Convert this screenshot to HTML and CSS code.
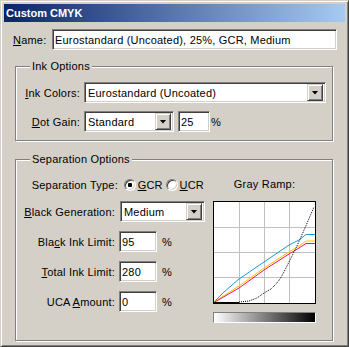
FILE: index.html
```html
<!DOCTYPE html>
<html lang="en">
<head>
    <meta charset="UTF-8">
    <title>Custom CMYK</title>
    <link rel="stylesheet" href="styles.css">
</head>
<body>
    <div class="window">
        <div class="titlebar">Custom CMYK</div>
        <div class="content">
            <div class="name-row">
                <label class="name-label" for="name"><u>N</u>ame:</label>
                <input class="field name-field" id="name" value="Eurostandard (Uncoated), 25%, GCR, Medium">
            </div>

            <fieldset class="group ink-group">
                <legend>Ink Options</legend>
                <div class="ink-grid">
                    <span class="label"><u>I</u>nk Colors:</span>
                    <div class="combo combo-ink"><span class="combo-text">Eurostandard (Uncoated)</span><span class="combo-btn"></span></div>
                    <span class="label"><u>D</u>ot Gain:</span>
                    <div class="gain-row">
                        <div class="combo combo-gain"><span class="combo-text">Standard</span><span class="combo-btn"></span></div>
                        <input class="field gain-field" value="25">
                        <span class="pct gain-pct">%</span>
                    </div>
                </div>
            </fieldset>

            <fieldset class="group sep-group">
                <legend>Separation Options</legend>
                <div class="sep-body">
                    <div class="sep-grid">
                        <div class="sep-type">
                            <span class="sep-type-label">Separation Type:</span>
                            <input type="radio" class="radio" name="sep" checked>
                            <span class="radio-text"><u>G</u>CR</span>
                            <input type="radio" class="radio" name="sep">
                            <span class="radio-text"><u>U</u>CR</span>
                        </div>

                        <span class="label"><u>B</u>lack Generation:</span>
                        <div class="combo combo-black"><span class="combo-text">Medium</span><span class="combo-btn"></span></div>

                        <span class="label">Bla<u>c</u>k Ink Limit:</span>
                        <input class="field num-field" value="95">
                        <span class="pct">%</span>

                        <span class="label"><u>T</u>otal Ink Limit:</span>
                        <input class="field num-field" value="280">
                        <span class="pct">%</span>

                        <span class="label">UCA <u>A</u>mount:</span>
                        <input class="field num-field" value="0">
                        <span class="pct">%</span>
                    </div>

                    <div class="ramp">
                        <div class="ramp-title">Gray Ramp:</div>
                        <svg class="ramp-graph" width="103" height="103" viewBox="0 0 103 103">
                            <rect x="0" y="0" width="103" height="103" fill="#fff"/>
                            <g stroke="#c0c0c0" stroke-width="1">
                                <line x1="26.5" y1="1" x2="26.5" y2="102"/>
                                <line x1="51.5" y1="1" x2="51.5" y2="102"/>
                                <line x1="76.5" y1="1" x2="76.5" y2="102"/>
                                <line x1="1" y1="26.5" x2="102" y2="26.5"/>
                                <line x1="1" y1="51.5" x2="102" y2="51.5"/>
                                <line x1="1" y1="76.5" x2="102" y2="76.5"/>
                            </g>
                            <g fill="none" stroke-width="1">
                                <polyline stroke="#1a9ad6" points="1,101 11,91 26,78 51,61 76,44 86,39 93,33.5 102,33.5"/>
                                <polyline stroke="#ffc400" points="1,101 26,85 51,67 76,51 86,45 93,40 102,40"/>
                                <polyline stroke="#f2145c" points="1,101.5 26,87 51,69 76,53 86,47 93,42.5 102,42.5"/>
                                <polyline stroke="#000" stroke-dasharray="1 1" points="26,101 36,100 44,97 51,92 58,88 63,83 67,78 71,71 76,61 80,53 83,47 88,36 95,20 101,6"/>
                                <line stroke="#000" x1="1" y1="101.5" x2="26" y2="101.5"/>
                            </g>
                            <rect x="0.5" y="0.5" width="102" height="102" fill="none" stroke="#000"/>
                        </svg>
                        <div class="ramp-bar"></div>
                    </div>
                </div>
            </fieldset>
        </div>
    </div>
</body>
</html>
```

FILE: styles.css
```css
* {
    box-sizing: border-box;
}
body {
    margin: 0;
    background-color: #d4d0c8;
    font: 11px "Liberation Sans", Arial, sans-serif;
    letter-spacing: 0.2px;
    color: #000;
}
u {
    text-decoration: underline;
    text-underline-offset: 1px;
}
.window {
    width: 349px;
    height: 347px;
    border: 1px solid;
    border-color: #d4d0c8 #404040 #404040 #d4d0c8;
    box-shadow: inset 1px 1px #fff, inset -1px -1px #808080;
    padding: 3px;
}
.titlebar {
    height: 18px;
    line-height: 18px;
    padding-left: 2px;
    background: linear-gradient(to right, #0a246a, #a6caf0);
    color: #fff;
    font-weight: bold;
    letter-spacing: 0;
}
.content {
    padding: 7px 0 0 9px;
}

/* sunken text field */
.field {
    height: 21px;
    margin: 0;
    padding: 0 2px;
    border: 1px solid;
    border-color: #808080 #fff #fff #808080;
    box-shadow: inset 1px 1px #404040, inset -1px -1px #d4d0c8;
    background-color: #fff;
    font: inherit;
    letter-spacing: inherit;
    color: #000;
    outline: none;
}
.name-row {
    display: flex;
    align-items: center;
}
.name-label {
    width: 39px;
}
.name-field {
    width: 285px;
}

/* etched group box */
.group {
    margin: 10px 0 0 2px;
    padding: 9px 0 8px 0;
    width: 318px;
    min-width: 0;
    border: 1px solid #808080;
    box-shadow: inset 1px 1px #fff, 1px 1px #fff;
}
.group legend {
    margin-left: 14px;
    padding: 0 2px;
    line-height: 13px;
    background-color: #d4d0c8;
}
.label {
    text-align: right;
    white-space: nowrap;
}

/* combo box */
.combo {
    display: flex;
    align-items: center;
    height: 21px;
    padding: 2px;
    border: 1px solid;
    border-color: #808080 #fff #fff #808080;
    box-shadow: inset 1px 1px #404040, inset -1px -1px #d4d0c8;
    background-color: #fff;
}
.combo-text {
    flex: 1;
    padding-left: 1px;
    white-space: nowrap;
    overflow: hidden;
}
.combo-btn {
    display: flex;
    align-items: center;
    justify-content: center;
    width: 16px;
    height: 17px;
    border: 1px solid;
    border-color: #d4d0c8 #404040 #404040 #d4d0c8;
    box-shadow: inset 1px 1px #fff, inset -1px -1px #808080;
    background-color: #d4d0c8;
}
.combo-btn::after {
    content: "";
    width: 7px;
    height: 4px;
    background-color: #000;
    clip-path: polygon(0 0, 100% 0, 50% 100%);
}

/* Ink Options */
.ink-grid {
    display: grid;
    grid-template-columns: 64px auto;
    column-gap: 4px;
    row-gap: 8px;
    align-items: center;
}
.combo-ink {
    width: 242px;
}
.gain-row {
    display: flex;
    align-items: center;
}
.combo-gain {
    width: 90px;
}
.gain-field {
    width: 32px;
    margin-left: 4px;
}
.gain-pct {
    margin-left: 6px;
}

/* Separation Options */
.group.sep-group {
    margin-top: 12px;
    padding: 11px 0 17px 0;
}
.sep-body {
    display: flex;
}
.sep-grid {
    display: grid;
    grid-template-columns: 99px 38px 43px;
    grid-template-rows: 15px repeat(4, 21px);
    column-gap: 4px;
    row-gap: 9px;
    align-items: center;
}
.sep-type {
    grid-column: 1 / -1;
    display: flex;
    align-items: center;
}
.sep-type-label {
    width: 104px;
    text-align: right;
}
.radio {
    appearance: none;
    width: 12px;
    height: 12px;
    margin: 0 0 0 6px;
    border-radius: 50%;
    border: 1px solid;
    border-color: #808080 #fff #fff #808080;
    box-shadow: inset 1px 1px #404040, inset -1px -1px #d4d0c8;
    background-color: #fff;
}
.radio + .radio-text + .radio {
    margin-left: 3px;
}
.radio:checked {
    background: radial-gradient(circle, #000 0 2px, #fff 2.5px);
}
.radio-text {
    margin-left: 2px;
}
.combo-black {
    grid-column: 2 / 4;
    width: 85px;
    margin-left: 1px;
}
.num-field {
    width: 38px;
}
.pct {
    margin-left: 1px;
}
.ramp {
    margin-left: 9px;
    width: 103px;
}
.ramp-title {
    height: 15px;
    line-height: 15px;
    text-align: center;
    margin-bottom: 9px;
}
.ramp-graph {
    display: block;
}
.ramp-bar {
    height: 11px;
    margin-top: 8px;
    border: 1px solid;
    border-color: #808080 #fff #fff #808080;
    background: linear-gradient(to right, #fff, #000);
}
```
